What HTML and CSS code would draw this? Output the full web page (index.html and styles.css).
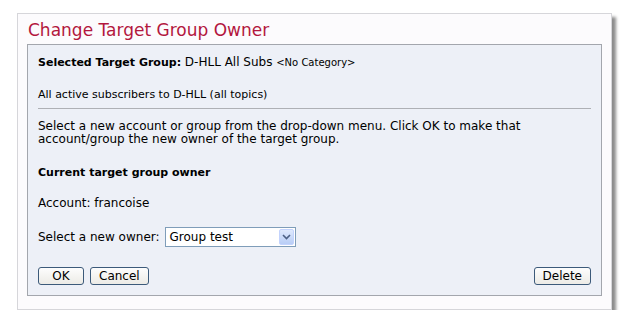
FILE: index.html
```html
<!DOCTYPE html>
<html lang="en">
<head>
  <meta charset="UTF-8">
  <title>Change Target Group Owner</title>
  <link rel="stylesheet" href="styles.css">
</head>
<body>
  <div class="dialog">
    <h1 class="dialog-title">Change Target Group Owner</h1>

    <div class="panel">
      <p class="line"><strong>Selected Target Group:</strong> D-HLL All Subs <span class="category">&lt;No Category&gt;</span></p>
      <p class="line description">All active subscribers to D-HLL (all topics)</p>
      <hr class="divider">

      <p class="intro">Select a new account or group from the drop-down menu. Click OK to make that<br>account/group the new owner of the target group.</p>

      <p class="line section-head"><strong>Current target group owner</strong></p>
      <p class="line account">Account: francoise</p>

      <div class="owner-row">
        <label for="newOwner">Select a new owner:</label>
        <div class="select-box" id="newOwner">
          <span class="select-value">Group test</span>
          <span class="select-arrow">
            <svg width="9" height="6" viewBox="0 0 9 6"><path d="M1 1 L4.5 4.5 L8 1" fill="none" stroke="#4d6185" stroke-width="1.6"/></svg>
          </span>
        </div>
      </div>

      <div class="button-row">
        <div class="left-buttons">
          <button class="btn btn-ok">OK</button>
          <button class="btn">Cancel</button>
        </div>
        <button class="btn">Delete</button>
      </div>
    </div>
  </div>
</body>
</html>
```

FILE: styles.css
```css
body {
  margin: 0;
  padding: 13px 0 0 17px;
  background-color: #ffffff;
  font-family: "DejaVu Sans", Verdana, sans-serif;
  font-size: 12px;
  color: #000;
}

/* Outer dialog card */
.dialog {
  width: 595px;
  box-sizing: border-box;
  background-color: #fcfbfd;
  border: 1px solid #d6d6da;
  box-shadow: 4px 4px 3px #8c8c8c;
  padding: 0 9px 13px 9px;
}

.dialog-title {
  margin: 0;
  padding: 6px 0 0 1px;
  height: 24px;
  font-size: 17px;
  font-weight: normal;
  line-height: 20px;
  color: #b3173d;
}

/* Inner blue panel */
.panel {
  background-color: #edf0f7;
  border: 1px solid #a3a6ad;
  padding: 11px 10px 10px 10px;
}

.panel p {
  margin: 0;
}

.panel strong {
  font-size: 11px;
}

.line {
  line-height: 12px;
}

.category {
  font-size: 10px;
}

.description {
  margin-top: 20px !important;
  font-size: 11px;
}

.divider {
  border: none;
  border-top: 1px solid #aeb0b5;
  margin: 7px 0 0 0;
  height: 0;
}

.intro {
  margin-top: 11px !important;
  line-height: 13px;
}

.section-head {
  margin-top: 20px !important;
}

.account {
  margin-top: 18px !important;
}

.owner-row {
  display: flex;
  align-items: center;
  gap: 5px;
  margin-top: 18px;
}

.select-box {
  display: flex;
  align-items: center;
  justify-content: space-between;
  width: 131px;
  height: 20px;
  box-sizing: border-box;
  background-color: #fff;
  border: 1px solid #7f9db9;
  padding: 0 1px 0 4px;
  font-size: 12px;
}

.select-arrow {
  display: flex;
  align-items: center;
  justify-content: center;
  width: 15px;
  height: 16px;
  background: linear-gradient(#dfe9fd, #b8cdf6);
  border: 1px solid #c3d3fd;
  box-sizing: border-box;
  border-radius: 2px;
}

.button-row {
  display: flex;
  justify-content: space-between;
  margin-top: 20px;
}

.left-buttons {
  display: flex;
  gap: 6px;
}

.btn {
  height: 18px;
  padding: 0 8px;
  font-family: "DejaVu Sans", Verdana, sans-serif;
  font-size: 12px;
  color: #000;
  background: linear-gradient(#fdfdfd, #ecebe6);
  border: 1px solid #3c5a7a;
  border-radius: 3px;
  cursor: pointer;
}

.btn-ok {
  width: 46px;
}
```
